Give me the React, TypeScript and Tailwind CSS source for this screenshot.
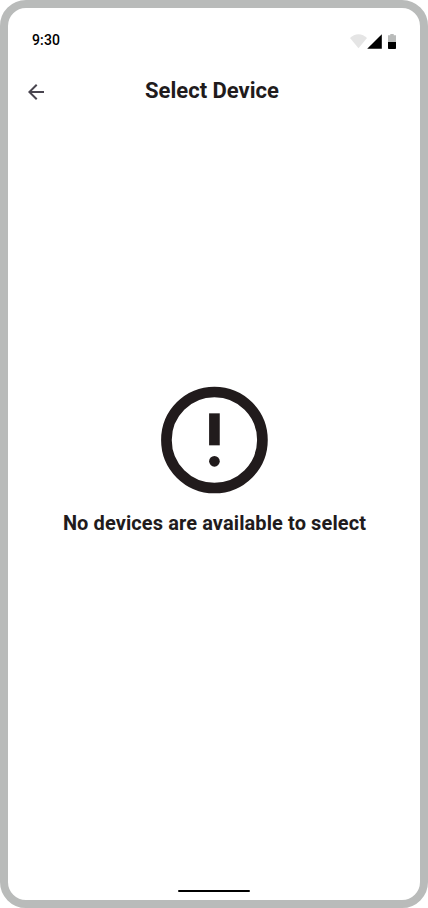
function StatusIcons() {
  return (
    <svg width="46" height="16" viewBox="0 0 46 16" aria-hidden="true">
      <path d="M8.5 14.3L0 4C2.4 1.6 5.3.2 8.5.2S14.6 1.6 17 4L8.5 14.3Z" fill="#e5e5e5" />
      <path d="M17.2 14.8L31.8.2V14.8Z" fill="#000" />
      <path d="M40.3 0h3.4v1.3h2.3V8h-8V1.3h2.3Z" fill="#b9bbba" />
      <path d="M38 8h8v6.2a.8.8 0 0 1-.8.8h-6.4a.8.8 0 0 1-.8-.8Z" fill="#000" />
    </svg>
  );
}

function BackArrow() {
  return (
    <svg width="24" height="24" viewBox="0 0 24 24" fill="#49454f" aria-hidden="true">
      <path d="M7.825 13L13.425 18.6L12 20L4 12L12 4L13.425 5.4L7.825 11H20V13H7.825Z" />
    </svg>
  );
}

function AlertIcon() {
  return (
    <svg width="128" height="128" viewBox="-0.08 0 24 24" aria-hidden="true">
      <circle cx="12" cy="12" r="9" fill="none" stroke="#211b1c" strokeWidth="2" />
      <path d="M11 7h2v6h-2Z" fill="#211b1c" />
      <circle cx="12" cy="16" r="1" fill="#211b1c" />
    </svg>
  );
}

export default function App() {
  return (
    <div className="flex h-[908px] w-[428px] flex-col overflow-hidden rounded-[26px] border-8 border-[#b9bbba] bg-white font-['Roboto',sans-serif] text-[#211b1c]">
      <div className="flex h-[52px] shrink-0 items-start justify-between pr-6 pl-6">
        <span className="mt-[22px] text-sm leading-5 font-medium tracking-[0.14px] text-black">9:30</span>
        <div className="mt-[26px]">
          <StatusIcons />
        </div>
      </div>
      <header className="grid h-16 shrink-0 grid-cols-[48px_1fr_52px] items-start pt-3">
        <button className="mt-2 ml-4 h-6 w-6" aria-label="Back">
          <BackArrow />
        </button>
        <h1 className="mt-[5px] text-center text-[22px] leading-7 font-bold whitespace-nowrap">Select Device</h1>
      </header>
      <main className="flex flex-1 flex-col items-center pt-[252px]">
        <AlertIcon />
        <p className="mt-[5px] pl-px text-xl leading-7 font-bold tracking-[0.1px] whitespace-nowrap">No devices are available to select</p>
      </main>
      <div className="flex h-[10px] shrink-0 justify-center">
        <div className="h-0.5 w-[72px] rounded-full bg-black" />
      </div>
    </div>
  );
}
